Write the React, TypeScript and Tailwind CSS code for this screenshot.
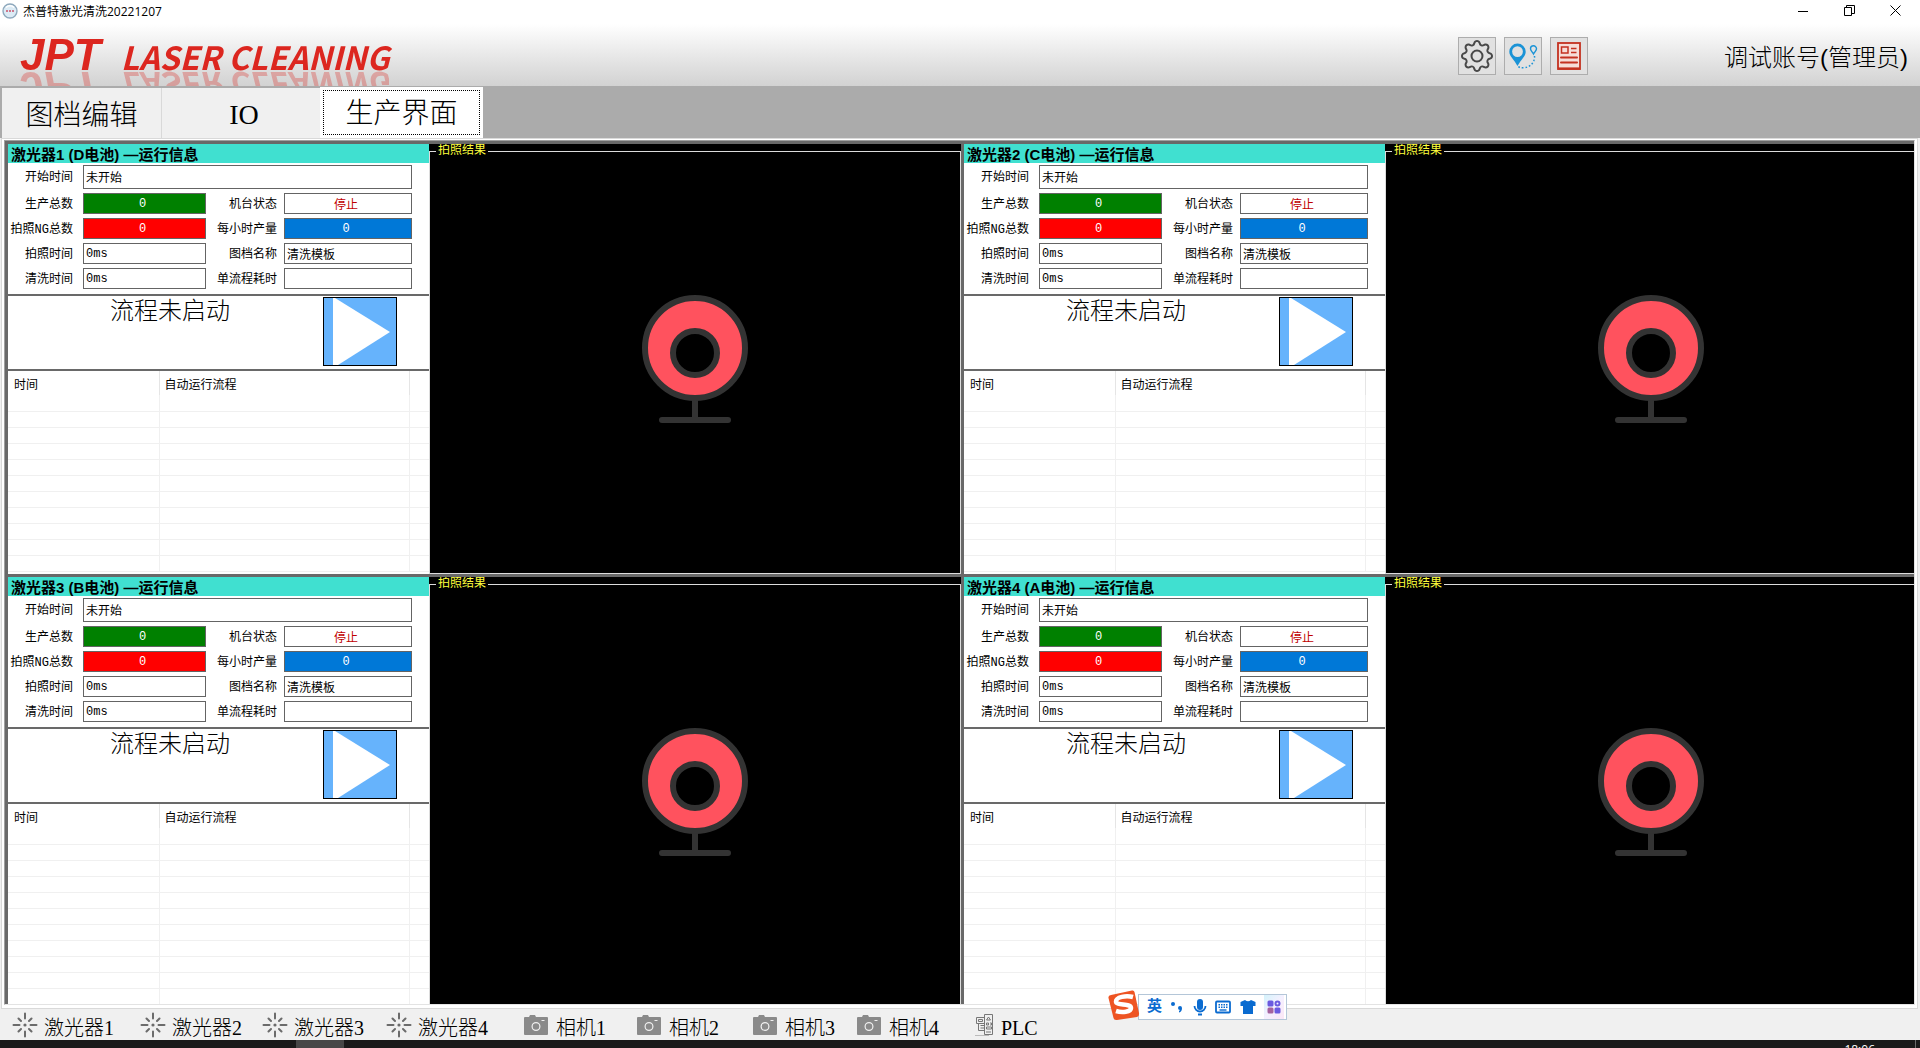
import { useId } from 'react'
import { BsGear } from 'react-icons/bs'

const panels = [
  { id: 1, battery: 'D电池' },
  { id: 2, battery: 'C电池' },
  { id: 3, battery: 'B电池' },
  { id: 4, battery: 'A电池' },
]

const devices = [
  { name: '激光器1', kind: 'laser', width: 'w-32 gap-1.5' },
  { name: '激光器2', kind: 'laser', width: 'w-[122px] gap-1.5' },
  { name: '激光器3', kind: 'laser', width: 'w-[124px] gap-1.5' },
  { name: '激光器4', kind: 'laser', width: 'w-[138px] gap-1.5' },
  { name: '相机1', kind: 'camera', width: 'w-[113px] gap-2' },
  { name: '相机2', kind: 'camera', width: 'w-[116px] gap-2' },
  { name: '相机3', kind: 'camera', width: 'w-[104px] gap-2' },
  { name: '相机4', kind: 'camera', width: 'w-[118px] gap-2' },
  { name: 'PLC', kind: 'plc', width: 'w-20 gap-1.5' },
]

function AppIcon() {
  return (
    <svg width="16" height="16" viewBox="0 0 16 16">
      <circle cx="8" cy="8" r="7" fill="#dcebf5" stroke="#8fa9bd" strokeWidth="1.4" />
      <path d="M4 4.500a5.500 5.500 0 0 1 8 0" stroke="#fff" strokeWidth="1.500" fill="none" />
      <path d="M4 8h2M7 8h2M10 8h2" stroke="#c8526a" strokeWidth="1.600" />
    </svg>
  )
}

function PinIcon() {
  return (
    <svg width="32" height="32" viewBox="0 0 32 32">
      <path
        fillRule="evenodd"
        fill="#1b93d6"
        d="M10.500 3.500a8.200 8.200 0 0 1 8.200 8.200c0 4.500-4.500 7.500-8.200 14.300C7 19.200 2.300 16.200 2.300 11.700a8.200 8.200 0 0 1 8.200-8.200zm0 2.700a5.400 5.400 0 1 0 0 10.800a5.400 5.400 0 0 0 0-10.800z"
      />
      <path
        d="M26.500 5.800a3 3 0 0 1 3 3c0 1.800-1.700 2.700-3 5.200c-1.300-2.500-3-3.400-3-5.200a3 3 0 0 1 3-3z"
        fill="none"
        stroke="#1b93d6"
        strokeWidth="1.400"
      />
      <path d="M27.500 16c.5 6-4 11.500-11 11.800c-3 .1-5-.5-6-2" fill="none" stroke="#1b93d6" strokeWidth="1.500" strokeDasharray="1.600 2" />
    </svg>
  )
}

function ReportIcon() {
  return (
    <svg width="24" height="28" viewBox="0 0 24 28" fill="none" stroke="#c43120">
      <rect x="1" y="1" width="22" height="26" fill="#f6ddd8" strokeWidth="1.800" />
      <path d="M1 26.500h22" strokeWidth="2.200" />
      <rect x="4.500" y="5" width="6.500" height="6" strokeWidth="1.500" />
      <path d="M14 6.500h5.500M14 10.500h5.500" strokeWidth="1.300" />
      <path d="M4 15.500h16M4 20.500h16" strokeWidth="2" strokeLinecap="round" />
    </svg>
  )
}

function LaserIcon() {
  return (
    <svg width="26" height="26" viewBox="0 0 26 26" stroke="#6b6b6b" strokeWidth="2" strokeLinecap="round">
      <circle cx="13" cy="13" r="1.600" fill="#6b6b6b" stroke="none" />
      <path d="M13 1.500v5M13 19.500v5M1.500 13h6M18.500 13h6M6.500 6.500l2.500 2.500M17 17l2.500 2.500M6.500 19.500l2.500-2.500M17 9l2.500-2.500" />
    </svg>
  )
}

function CameraIcon() {
  return (
    <svg width="24" height="22" viewBox="0 0 24 22">
      <path d="M1 3h4l1-2h5l1 2h11a1 1 0 0 1 1 1v16a1 1 0 0 1-1 1H1a1 1 0 0 1-1-1V4a1 1 0 0 1 1-1z" fill="#8a8a8a" />
      <circle cx="12" cy="12.500" r="3.900" fill="none" stroke="#f0f0f0" strokeWidth="1.200" />
      <path d="M17.500 6.500h3" stroke="#f0f0f0" />
    </svg>
  )
}

function PlcIcon() {
  return (
    <svg width="20" height="22" viewBox="0 0 20 22" fill="none" stroke="#777" strokeWidth="1">
      <path d="M9.500.500h8v20h-8z" />
      <path d="M1.500 3.500h8v6h-8zM3.500 9.500h6v7h-6zM3.500 5.500h4v2h-4zM5.500 11.500h4M5.500 14h4M13.500 3l-2 3h4zM11.500 9h2v2h-2zM15 9h1.500v2H15M11.500 13h5v2h-5zM11 18h5" />
      <path d="M0 21.500h14" stroke="#bbb" />
    </svg>
  )
}

function Webcam() {
  return (
    <svg width="106" height="128" viewBox="0 0 106 128" stroke="#333" strokeWidth="6">
      <path d="M53 104v20M20 125h66" strokeLinecap="round" />
      <circle cx="53" cy="53" r="50" fill="#ff525e" />
      <circle cx="53" cy="58" r="22" fill="#000" />
    </svg>
  )
}

type FieldProps = { label: string; value: string; look?: string; wide?: boolean; second?: boolean }

function Field({ label, value, look = 'bg-white text-black', wide, second }: FieldProps) {
  const id = useId()
  return (
    <>
      <label htmlFor={id} className={`pt-0.5 text-right whitespace-nowrap ${second ? 'pr-[7px]' : 'pr-2.5'}`}>
        {label}
      </label>
      <input
        id={id}
        readOnly
        defaultValue={value}
        className={`w-full border border-[#646464] pl-0.5 outline-none ${wide ? 'col-span-3 h-6' : 'h-[21px]'} ${look}`}
      />
    </>
  )
}

function LaserPanel({ id, battery }: { id: number; battery: string }) {
  return (
    <section className="flex min-w-0 overflow-hidden border-t-3 border-l-3 border-[#696969] bg-black">
      <div className="flex w-[421px] shrink-0 flex-col bg-white">
        <h2 className="h-[19px] bg-[#40e0d0] pl-[3px] text-[15px] leading-[21px] font-bold whitespace-pre font-['Liberation_Sans','Noto_Sans_CJK_SC',sans-serif]">
          {`激光器${id} (${battery}) —运行信息`}
        </h2>
        <div className="grid grid-cols-[75px_123px_78px_128px] items-center gap-y-1 border-b-2 border-[#696969] pt-0.5 pb-[5px]">
          <Field label="开始时间" value="未开始" wide />
          <Field label="生产总数" value="0" look="bg-[#008000] pr-1.5 text-white text-center" />
          <Field label="机台状态" value="停止" look="bg-white pr-1.5 text-[#c00000] text-center" second />
          <Field label="拍照NG总数" value="0" look="bg-[#ff0000] pr-1.5 text-white text-center" />
          <Field label="每小时产量" value="0" look="bg-[#0078d7] pr-1.5 text-white text-center" second />
          <Field label="拍照时间" value="0ms" />
          <Field label="图档名称" value="清洗模板" second />
          <Field label="清洗时间" value="0ms" />
          <Field label="单流程耗时" value="" second />
        </div>
        <div className="flex h-[75px] justify-end border-b-2 border-[#696969] pt-px pr-8">
          <p className="mr-[93px] pt-[3px] text-2xl leading-[26px] font-light">流程未启动</p>
          <button aria-label="启动" className="h-[69px] w-[74px] border border-black bg-[#66b3fc]">
            <svg className="h-full w-full" viewBox="0 0 72 67" preserveAspectRatio="none">
              <path d="M9 0h2L66 34L14 67H9z" fill="#fff" />
            </svg>
          </button>
        </div>
        <div className="min-h-0 flex-1 overflow-hidden">
          <table className="w-full table-fixed border-collapse">
            <colgroup>
              <col className="w-[151px]" />
              <col className="w-[250px]" />
              <col />
            </colgroup>
            <thead>
              <tr className="h-6 text-left">
                <th className="border-r border-[#e5e5e5] pt-1.5 pl-1.5 leading-4 font-normal">时间</th>
                <th className="border-r border-[#e5e5e5] pt-1.5 pl-[5px] leading-4 font-normal">自动运行流程</th>
                <th />
              </tr>
            </thead>
            <tbody>
              {Array.from({ length: 11 }, (_, i) => (
                <tr key={i} className="h-4 border-b border-[#f0f0f0]">
                  <td className="border-r border-[#f0f0f0]" />
                  <td className="border-r border-[#f0f0f0]" />
                  <td />
                </tr>
              ))}
            </tbody>
          </table>
        </div>
      </div>
      <fieldset className="flex min-w-0 flex-1 items-center justify-center border border-[#dcdcdc] pb-3.5">
        <legend className="ml-1.5 px-0.5 pt-px leading-[13px] text-[#ffff3c]">拍照结果</legend>
        <Webcam />
      </fieldset>
    </section>
  )
}

function InputMethodBar() {
  return (
    <div className="absolute right-[633px] bottom-7 flex h-[26px] w-[149px] items-center justify-between border border-[#b4c6d8] bg-white pr-0.5 pl-2 text-[#0a6bd0]">
      <svg className="absolute -top-[5px] -left-[31px]" width="32" height="31" viewBox="0 0 32 31">
        <path d="M3 5L24 0.500Q26 0 26.500 2L31 23Q31.500 26 29 27L9 30Q6 30.500 5.500 28L0.500 8Q0 5.500 3 5z" fill="#ee5423" />
        <path d="M25 7C18 5 8 7 8 11.500C8 16 23 13 23 18C23 22 14 23 8 21" fill="none" stroke="#fff" strokeWidth="4.500" />
      </svg>
      <span className="pt-0.5 text-[15px] leading-5 font-bold">英</span>
      <svg width="14" height="14" viewBox="0 0 14 14" fill="#0a6bd0">
        <circle cx="3" cy="4" r="2" />
        <path d="M8 8a2 2 0 0 1 4 0c0 2.500-1 4-3 4.500V11l1-1a2 2 0 0 1-2-2z" />
      </svg>
      <svg width="14" height="18" viewBox="0 0 14 18" fill="#0a6bd0">
        <rect x="4" y="1" width="6" height="11" rx="3" />
        <path d="M1.500 8a5.500 5.500 0 0 0 11 0M5 16.500h4" stroke="#0a6bd0" strokeWidth="1.800" fill="none" />
      </svg>
      <svg width="16" height="14" viewBox="0 0 16 14" fill="none" stroke="#0a6bd0">
        <rect x="1" y="1.500" width="14" height="11" rx="1" strokeWidth="1.800" />
        <path d="M3.500 4.800h9M3.500 7.300h9" strokeWidth="1.400" strokeDasharray="1.500 1" />
        <path d="M4.500 10h7" strokeWidth="1.400" />
      </svg>
      <svg width="16" height="14" viewBox="0 0 16 14" fill="#0a6bd0">
        <path d="M5 0q3 2.500 6 0l4.500 2v4H13v8H3V6H.5V2z" />
      </svg>
      <span className="flex h-6 w-5 items-center justify-center bg-gradient-to-br from-[#d4f3fb] via-[#f4f0ff] to-[#fbe6f5]">
        <svg width="14" height="14" viewBox="0 0 14 14" fill="#6a5ae0">
          <rect x="0.500" y="0.500" width="6" height="6" rx="1.500" />
          <rect x="8.500" y="1.500" width="4" height="4" rx="2" fill="none" stroke="#6a5ae0" strokeWidth="2" />
          <rect x="0.500" y="7.500" width="6" height="6" rx="1.500" fill="#a4629f" />
          <rect x="7.500" y="7.500" width="6" height="6" rx="1.500" />
        </svg>
      </span>
    </div>
  )
}

export default function App() {
  return (
    <div className="relative flex h-screen flex-col overflow-hidden bg-[#f0f0f0] text-xs text-black font-['Liberation_Mono','Noto_Sans_CJK_SC',monospace]">
      <div className="flex h-6 shrink-0 items-center bg-white pb-[3px] pl-0.5">
        <AppIcon />
        <h1 className="ml-[5px] pt-0.5 font-['Open_Sans','Noto_Sans_CJK_SC',sans-serif]">杰普特激光清洗20221207</h1>
        <div className="mr-0.5 ml-auto flex">
          <button aria-label="最小化" className="flex h-5 w-[46px] items-center justify-center">
            <svg width="10" height="10" stroke="#000"><path d="M0 5.500h10" /></svg>
          </button>
          <button aria-label="还原" className="flex h-5 w-[46px] items-center justify-center">
            <svg width="11" height="11" stroke="#000" fill="none"><path d="M.5 2.500h7v8h-7zM2.500 2.500v-2h8v8h-3" /></svg>
          </button>
          <button aria-label="关闭" className="flex h-5 w-[46px] items-center justify-center">
            <svg width="11" height="11" stroke="#000"><path d="M.5.5l10 10M10.500.5l-10 10" /></svg>
          </button>
        </div>
      </div>

      <header className="flex h-[62px] shrink-0 overflow-hidden bg-gradient-to-b from-white to-[#d2d2d2] pr-3 pl-5">
        <div className="flex h-[62px] items-baseline gap-5 font-bold text-[#dc261f] italic [-webkit-box-reflect:below_-30px_linear-gradient(rgb(0_0_0/0.3),rgb(0_0_0/0.3))]">
          <span className="text-[44px] leading-[62px] font-['Liberation_Sans',sans-serif]">JPT</span>
          <span className="text-[32px] leading-[62px] font-['Noto_Sans_CJK_SC',sans-serif]">LASER CLEANING</span>
        </div>
        <div className="ml-auto flex gap-2 pt-[13px]">
          <button aria-label="设置" className="flex size-[38px] items-center justify-center border border-[#adadad] bg-[#e1e1e1]">
            <BsGear size={32} color="#484848" />
          </button>
          <button aria-label="轨迹" className="flex size-[38px] items-center justify-center border border-[#adadad] bg-[#e1e1e1]">
            <PinIcon />
          </button>
          <button aria-label="报表" className="flex size-[38px] items-center justify-center border border-[#adadad] bg-[#e1e1e1]">
            <ReportIcon />
          </button>
        </div>
        <p className="ml-[136px] pt-[18px] text-2xl font-light font-['Liberation_Sans','Noto_Sans_CJK_SC',sans-serif]">调试账号(管理员)</p>
      </header>

      <nav className="flex h-[52px] shrink-0 items-stretch bg-[#ababab] pl-0.5 text-[28px] font-light">
        <button className="mt-0.5 w-[160px] border-r border-[#d9d9d9] bg-[#f0f0f0] pt-2.5">图档编辑</button>
        <button className="mt-0.5 w-[158px] bg-[#f0f0f0] pt-1 pl-1.5 font-['Liberation_Serif',serif]">IO</button>
        <button className="mt-px w-[163px] border border-white bg-white p-0.5">
          <span className="flex h-full items-center justify-center border border-dotted border-black pt-1.5">生产界面</span>
        </button>
      </nav>

      <main className="mr-0.5 ml-px flex min-h-0 flex-1 border border-[#d9d9d9] bg-white px-0.5 pt-px pb-[3px]">
        <div className="min-h-0 flex-1 overflow-hidden border border-t-[#a0a0a0] border-r-[#e3e3e3] border-b-[#e3e3e3] border-l-[#a0a0a0]">
          <div className="-mr-[3px] grid h-[calc(100%+3px)] grid-cols-2 grid-rows-2">
            {panels.map((p) => (
              <LaserPanel key={p.id} {...p} />
            ))}
          </div>
        </div>
      </main>

      <footer className="flex h-[31px] shrink-0 items-center pl-3">
        {devices.map((d) => (
          <div key={d.name} className={`flex items-center ${d.width}`}>
            {d.kind === 'laser' && <LaserIcon />}
            {d.kind === 'camera' && <CameraIcon />}
            {d.kind === 'plc' && <PlcIcon />}
            <span className="pt-1.5 text-xl leading-6 font-light whitespace-nowrap font-['Liberation_Serif','Noto_Sans_CJK_SC',serif]">{d.name}</span>
          </div>
        ))}
      </footer>

      <div className="flex h-2 shrink-0 overflow-hidden bg-[#1a1a1a] pr-1 pl-[296px] text-white">
        <span className="w-12 bg-[#474747]" />
        <time className="mr-10 ml-auto pt-1 leading-3 font-['Open_Sans',sans-serif]">18:06</time>
        <span className="w-px bg-[#6b6b6b]" />
      </div>
      <InputMethodBar />
    </div>
  )
}
